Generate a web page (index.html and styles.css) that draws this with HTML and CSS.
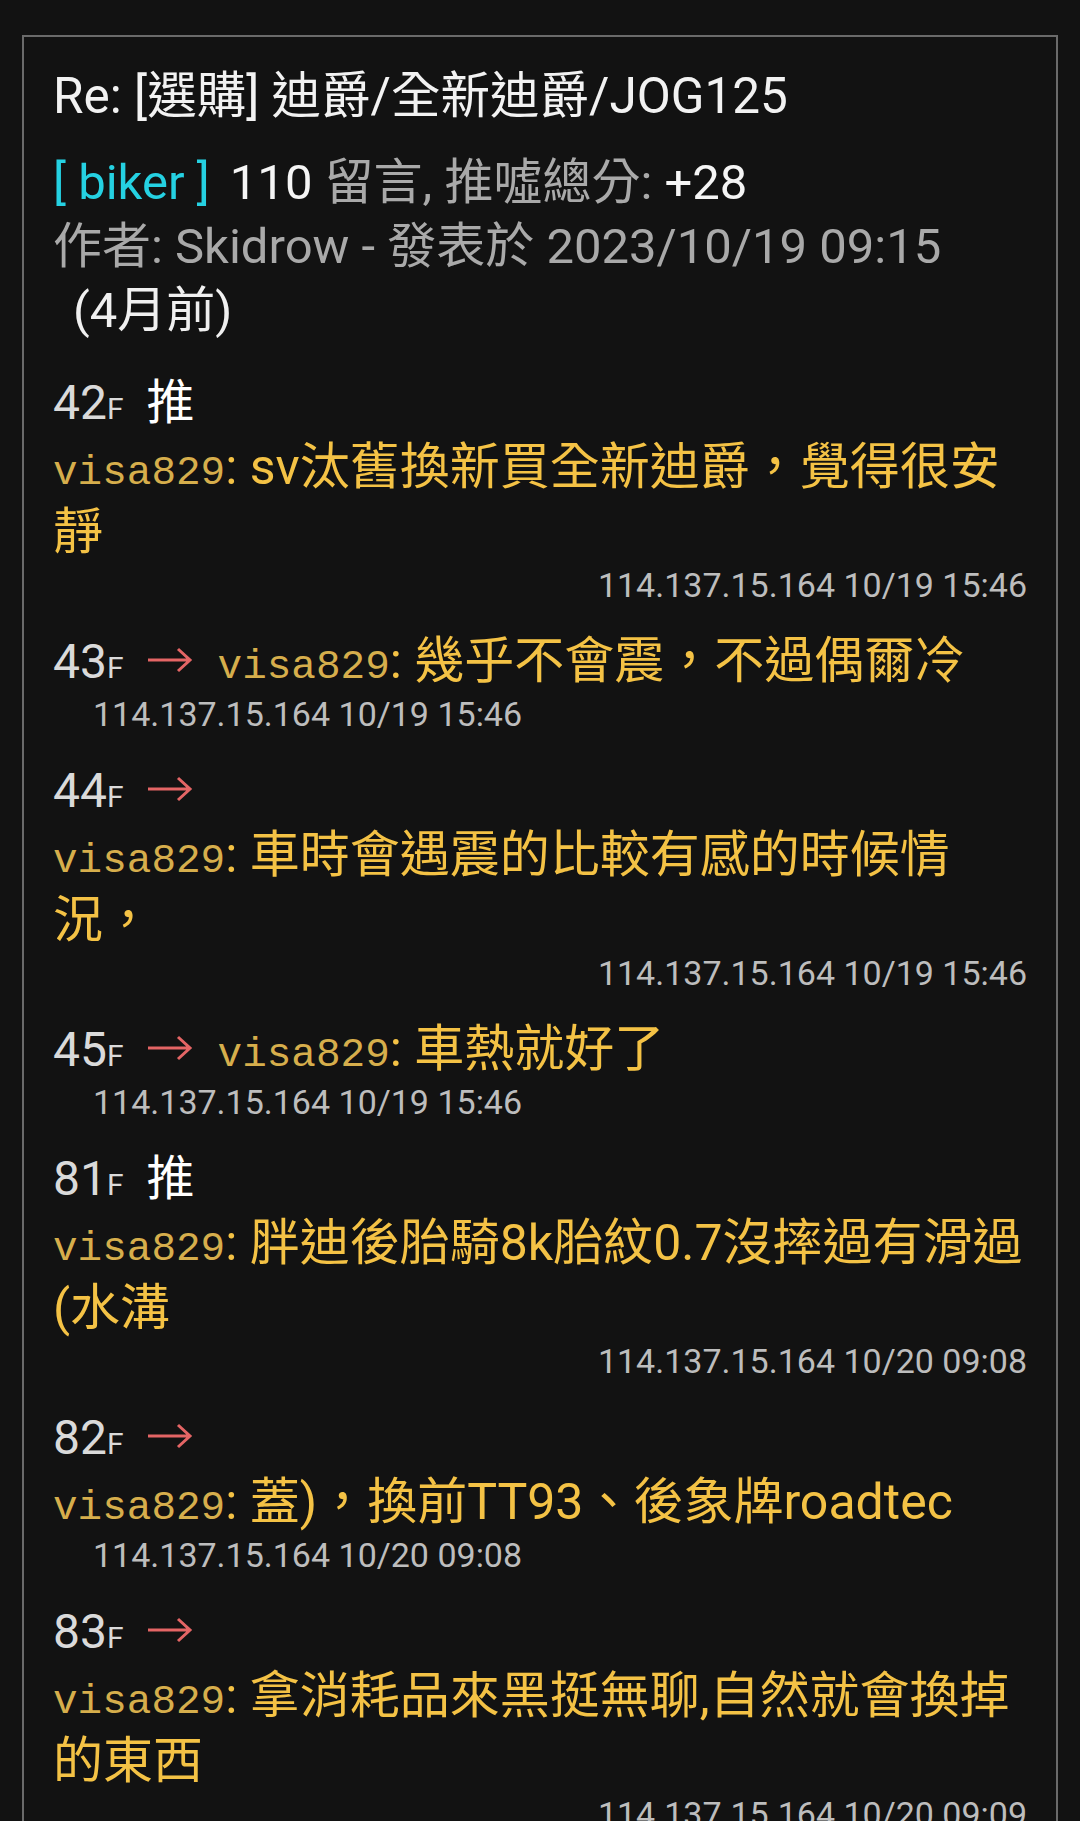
FILE: index.html
```html
<!DOCTYPE html>
<html lang="zh-Hant">
<head>
    <meta charset="UTF-8">
    <meta name="viewport" content="width=device-width, initial-scale=1.0">
    <title>Re: [選購] 迪爵/全新迪爵/JOG125</title>
    <link rel="stylesheet" href="styles.css">
</head>
<body>
    <div id="post">
        <h1 id="post-title">Re: [選購] 迪爵/全新迪爵/JOG125</h1>
        <div class="meta"><span class="board">[ biker ]</span> <span class="hl count">110</span> 留言, 推噓總分: <span class="hl">+28</span></div>
        <div class="meta">作者: Skidrow - 發表於 2023/10/19 09:15</div>
        <div class="meta ago">(4月前)</div>

        <div id="push-list">
            <div class="push">
                <div class="push-head"><span class="floor">42<small>F</small></span><span class="tag">推</span></div>
                <div class="push-body"><span class="user">visa829</span>: sv汰舊換新買全新迪爵，覺得很安靜</div>
                <div class="ip right">114.137.15.164 10/19 15:46</div>
            </div>
            <div class="push">
                <div class="push-head"><span class="floor">43<small>F</small></span><svg class="arrow" width="46" height="26" viewBox="0 0 46 26"><path d="M1 13H43M31 2L43 13L31 24"/></svg><span class="user">visa829</span><span class="text">: 幾乎不會震，不過偶爾冷</span></div>
                <div class="ip indent">114.137.15.164 10/19 15:46</div>
            </div>
            <div class="push">
                <div class="push-head"><span class="floor">44<small>F</small></span><svg class="arrow" width="46" height="26" viewBox="0 0 46 26"><path d="M1 13H43M31 2L43 13L31 24"/></svg></div>
                <div class="push-body"><span class="user">visa829</span>: 車時會遇震的比較有感的時候情況，</div>
                <div class="ip right">114.137.15.164 10/19 15:46</div>
            </div>
            <div class="push">
                <div class="push-head"><span class="floor">45<small>F</small></span><svg class="arrow" width="46" height="26" viewBox="0 0 46 26"><path d="M1 13H43M31 2L43 13L31 24"/></svg><span class="user">visa829</span><span class="text">: 車熱就好了</span></div>
                <div class="ip indent">114.137.15.164 10/19 15:46</div>
            </div>
            <div class="push">
                <div class="push-head"><span class="floor">81<small>F</small></span><span class="tag">推</span></div>
                <div class="push-body"><span class="user">visa829</span>: 胖迪後胎騎8k胎紋0.7沒摔過有滑過(水溝</div>
                <div class="ip right">114.137.15.164 10/20 09:08</div>
            </div>
            <div class="push">
                <div class="push-head"><span class="floor">82<small>F</small></span><svg class="arrow" width="46" height="26" viewBox="0 0 46 26"><path d="M1 13H43M31 2L43 13L31 24"/></svg></div>
                <div class="push-body"><span class="user">visa829</span>: 蓋)，換前TT93、後象牌roadtec</div>
                <div class="ip indent">114.137.15.164 10/20 09:08</div>
            </div>
            <div class="push">
                <div class="push-head"><span class="floor">83<small>F</small></span><svg class="arrow" width="46" height="26" viewBox="0 0 46 26"><path d="M1 13H43M31 2L43 13L31 24"/></svg></div>
                <div class="push-body"><span class="user">visa829</span>: 拿消耗品來黑挺無聊,自然就會換掉的東西</div>
                <div class="ip right">114.137.15.164 10/20 09:09</div>
            </div>
        </div>
    </div>
</body>
</html>
```

FILE: styles.css
```css
body {
    margin: 0;
    background-color: #121212;
    font-family: Roboto, "Noto Sans CJK TC", sans-serif;
    color: #a9a9a9;
}
#post {
    margin: 35px 22px 0;
    border: 2px solid #6a6a6a;
    padding: 27px 29px 40px;
}
#post-title {
    margin: 0 0 23px;
    font-size: 49.5px;
    font-weight: normal;
    line-height: 64px;
    color: #f2f2f2;
}
.meta {
    font-size: 49px;
    line-height: 64px;
}
.board {
    color: #25d1e2;
}
.hl {
    color: #f5f5f5;
}
.count {
    margin-left: 8px;
}
.ago {
    padding-left: 20px;
    color: #f0f0f0;
}
#push-list {
    margin-top: 28px;
}
.push {
    margin-bottom: 25px;
}
.push-head {
    font-size: 48px;
    line-height: 64px;
}
.floor {
    color: #dadada;
}
.floor small {
    font-size: 30px;
    line-height: 1;
}
.tag {
    margin-left: 23px;
    color: #fff;
}
.arrow {
    margin: 0 25px 0 23px;
    vertical-align: 5px;
}
.arrow path {
    fill: none;
    stroke: #e46565;
    stroke-width: 3;
}
.user {
    font-family: "Liberation Mono", monospace;
    font-size: 41px;
    line-height: 1;
    color: #d6ae4c;
}
.text {
    font-size: 50px;
    line-height: 1;
    color: #f4c245;
}
.push-body {
    font-size: 50px;
    line-height: 65px;
    color: #f4c245;
}
.ip {
    font-size: 34px;
    line-height: 40px;
    color: #bdbdbd;
}
.ip.right {
    text-align: right;
}
.ip.indent {
    padding-left: 40px;
}
```
